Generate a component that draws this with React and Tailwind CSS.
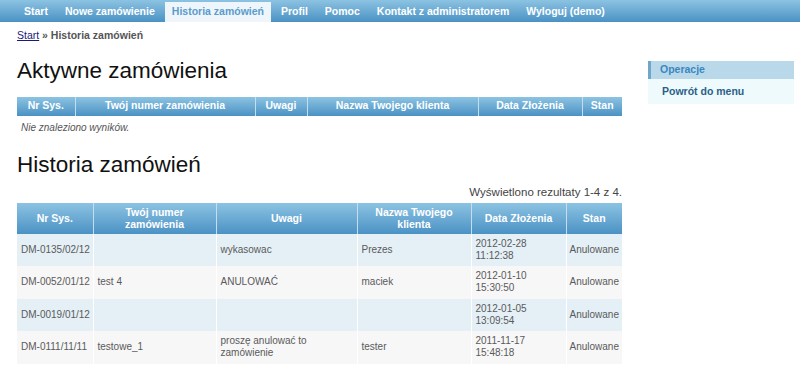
const nav = ["Start", "Nowe zamówienie", "Historia zamówień", "Profil", "Pomoc", "Kontakt z administratorem", "Wyloguj (demo)"]

const rows = [
	["DM-0135/02/12", "", "wykasowac", "Prezes", "2012-02-28", "11:12:38"],
	["DM-0052/01/12", "test 4", "ANULOWAĆ", "maciek", "2012-01-10", "15:30:50"],
	["DM-0019/01/12", "", "", "", "2012-01-05", "13:09:54"],
	["DM-0111/11/11", "testowe_1", "proszę anulować to zamówienie", "tester", "2011-11-17", "15:48:18"],
]

const headGrad = "bg-gradient-to-b from-[#8cc3e2] to-[#4a92c4]"

export default function App() {
	return (
		<div className="w-[800px] h-[377px] bg-white overflow-hidden font-['Liberation_Sans',Arial,sans-serif] text-[#555]">
			<div className={`h-[22px] flex items-end pl-[17px] gap-[3px] ${headGrad}`}>
				{nav.map((n) => (
					<div
						key={n}
						className={
							n === "Historia zamówień"
								? "h-[20px] px-[7px] flex items-center bg-[#eef6fb] text-[#5a9ccb] text-[10.5px] font-bold"
								: "h-[20px] px-[7px] flex items-center text-white text-[10.5px] font-bold"
						}>
						{n}
					</div>
				))}
			</div>

			<div className="flex">
				<div className="w-[605px] ml-[17px]">
					<div className="mt-[6px] text-[10.5px] font-bold text-[#555]">
						<a href="#" className="underline text-[#1a1a7a] font-normal">Start</a> » Historia zamówień
					</div>

					<h1 className="mt-[14px] text-[22.5px] leading-[26px] text-[#111]">Aktywne zamówienia</h1>
					<table className="mt-[13px] w-full border-collapse table-fixed text-[10.5px]">
						<thead>
							<tr className={`h-[19px] text-white font-bold ${headGrad}`}>
								<th className="w-[58px] border-r border-[#c4def0]">Nr Sys.</th>
								<th className="w-[180px] border-r border-[#c4def0]">Twój numer zamówienia</th>
								<th className="w-[52px] border-r border-[#c4def0]">Uwagi</th>
								<th className="w-[171px] border-r border-[#c4def0]">Nazwa Twojego klienta</th>
								<th className="w-[104px] border-r border-[#c4def0]">Data Złożenia</th>
								<th>Stan</th>
							</tr>
						</thead>
					</table>
					<div className="mt-[4px] ml-[4px] italic text-[10px] text-[#555]">Nie znaleziono wyników.</div>

					<h1 className="mt-[17px] text-[22.5px] leading-[26px] text-[#111]">Historia zamówień</h1>
					<div className="mt-[7px] text-right text-[11.5px] leading-[14px] text-[#444]">Wyświetlono rezultaty 1-4 z 4.</div>
					<table className="mt-[4px] w-full border-collapse table-fixed text-[10px] text-[#5a5a5a]">
						<thead>
							<tr className={`h-[31px] text-white font-bold text-[10.5px] leading-[12px] ${headGrad}`}>
								<th className="w-[76px] border-r border-[#c4def0]">Nr Sys.</th>
								<th className="w-[123px] border-r border-[#c4def0]">Twój numer<br />zamówienia</th>
								<th className="w-[141px] border-r border-[#c4def0]">Uwagi</th>
								<th className="w-[114px] border-r border-[#c4def0]">Nazwa Twojego<br />klienta</th>
								<th className="w-[95px] border-r border-[#c4def0]">Data Złożenia</th>
								<th>Stan</th>
							</tr>
						</thead>
						<tbody>
							{rows.map((r, i) => (
								<tr key={r[0]} className={i % 2 === 0 ? "h-[32px] bg-[#e4f0f6]" : "h-[33px] bg-[#f7f7f7]"}>
									<td className="px-[4px] border-r border-white leading-[12px] whitespace-nowrap">{r[0]}</td>
									<td className="px-[4px] border-r border-white leading-[12px]">{r[1]}</td>
									<td className="px-[4px] border-r border-white leading-[12px]">{r[2]}</td>
									<td className="px-[4px] border-r border-white leading-[12px]">{r[3]}</td>
									<td className="px-[4px] border-r border-white leading-[12px]">{r[4]}<br />{r[5]}</td>
									<td className="px-[3px] leading-[12px] whitespace-nowrap">Anulowane</td>
								</tr>
							))}
						</tbody>
					</table>
				</div>

				<div className="ml-[26px] mt-[39px] w-[146px] self-start">
					<div className="h-[18px] bg-[#b9d8ea] border-l-[3px] border-[#6fa6cb] pl-[9px] flex items-center text-[10.5px] font-bold text-[#3a87bf]">
						Operacje
					</div>
					<div className="h-[25px] bg-[#effafd] pl-[14px] flex items-center text-[10.5px] font-bold text-[#2b6086]">
						Powrót do menu
					</div>
				</div>
			</div>
		</div>
	)
}
